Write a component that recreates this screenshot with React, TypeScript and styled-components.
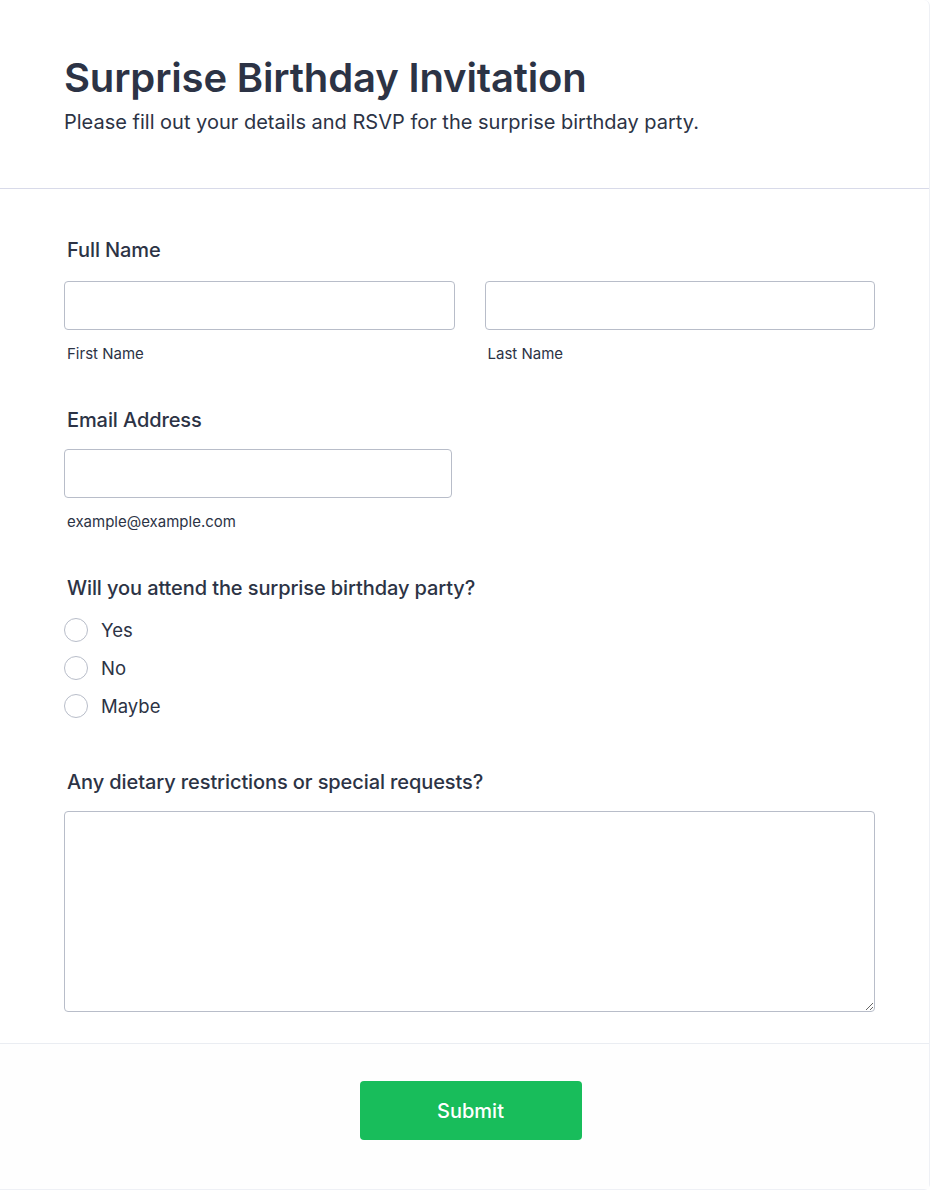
import React from 'react';
import styled, { createGlobalStyle } from 'styled-components';

const GlobalStyle = createGlobalStyle`
  html, body {
    margin: 0;
    padding: 0;
    background: #ffffff;
  }

  body {
    font-family: "Inter", "Noto Sans", sans-serif;
    color: #2c3345;
  }

  * {
    box-sizing: border-box;
  }
`;

const Card = styled.form`
  width: 930px;
  min-height: 1190px;
  background: #ffffff;
  border-right: 1px solid #eef0f5;
  border-bottom: 1px solid #eef0f5;
  border-top-right-radius: 6px;
  border-bottom-right-radius: 6px;
  display: flex;
  flex-direction: column;
`;

const Header = styled.header`
  padding: 56px 64px 52px;
  border-bottom: 1px solid #d8dae9;
`;

const Title = styled.h1`
  margin: 0;
  font-size: 40px;
  line-height: 44px;
  font-weight: 600;
  letter-spacing: -0.15px;
  color: #2c3345;
`;

const Subtitle = styled.p`
  margin: 9px 0 0;
  font-size: 20px;
  line-height: 27px;
  font-weight: 400;
  color: #2c3345;
`;

const Body = styled.div`
  padding: 47px 54px 31px 64px;
  display: flex;
  flex-direction: column;
`;

const Field = styled.div<{ $spacing?: number }>`
  display: flex;
  flex-direction: column;
  margin-bottom: ${(p) => p.$spacing ?? 43}px;

  &:last-child {
    margin-bottom: 0;
  }
`;

// $gap: space under the label, $nudge: extra room above it
const Label = styled.label<{ $gap?: number; $nudge?: number }>`
  display: block;
  padding-left: 3px;
  padding-top: ${(p) => p.$nudge ?? 0}px;
  margin-bottom: ${(p) => p.$gap ?? 16}px;
  font-size: 20px;
  line-height: 27px;
  font-weight: 500;
  letter-spacing: -0.1px;
  color: #2c3345;
`;

const Row = styled.div`
  display: grid;
  grid-template-columns: 1fr 1fr;
  column-gap: 30px;
`;

const Column = styled.div<{ $width?: number }>`
  display: flex;
  flex-direction: column;
  width: ${(p) => (p.$width ? `${p.$width}px` : 'auto')};
`;

const TextInput = styled.input`
  height: 49px;
  width: 100%;
  border: 1px solid #b8bdc9;
  border-radius: 4px;
  background: #ffffff;
  font: inherit;
  font-size: 16px;
  padding: 0 12px;
  outline: none;
`;

const SubLabel = styled.span`
  display: block;
  margin-top: 14px;
  padding-left: 3px;
  font-size: 15px;
  line-height: 20px;
  color: #2c3345;
`;

const RadioList = styled.div`
  display: flex;
  flex-direction: column;
  margin-top: -7px;
`;

const RadioRow = styled.label`
  display: flex;
  align-items: center;
  height: 38px;
  gap: 13px;
  font-size: 18.5px;
  color: #2c3345;
  cursor: pointer;
`;

const RadioCircle = styled.span`
  width: 24px;
  height: 24px;
  border-radius: 50%;
  border: 1px solid #b8bdc9;
  background: #ffffff;
  flex-shrink: 0;
`;

const TextArea = styled.textarea`
  width: 100%;
  height: 201px;
  border: 1px solid #b8bdc9;
  border-radius: 4px;
  background: #ffffff;
  font: inherit;
  font-size: 16px;
  padding: 10px 12px;
  outline: none;
  resize: vertical;
  display: block;
`;

const Footer = styled.div`
  flex: 1;
  border-top: 1px solid #eaedf2;
  background: #fefefe;
  display: flex;
  justify-content: center;
  padding: 37px 0 49px 12px;
`;

const SubmitButton = styled.button`
  width: 222px;
  height: 59px;
  border: none;
  border-radius: 4px;
  background: #18bd5b;
  color: #ffffff;
  font-family: "Inter", "Noto Sans", sans-serif;
  font-size: 20px;
  font-weight: 500;
  cursor: pointer;
`;

const attendance = ['Yes', 'No', 'Maybe'];

export default function App() {
  return (
    <>
      <GlobalStyle />
      <Card onSubmit={(e) => e.preventDefault()}>
        <Header>
          <Title>Surprise Birthday Invitation</Title>
          <Subtitle>Please fill out your details and RSVP for the surprise birthday party.</Subtitle>
        </Header>

        <Body>
          <Field>
            <Label $nudge={1} $gap={17}>Full Name</Label>
            <Row>
              <Column>
                <TextInput type="text" />
                <SubLabel>First Name</SubLabel>
              </Column>
              <Column>
                <TextInput type="text" />
                <SubLabel>Last Name</SubLabel>
              </Column>
            </Row>
          </Field>

          <Field>
            <Label $gap={15}>Email Address</Label>
            <Column $width={388}>
              <TextInput type="email" />
              <SubLabel>example@example.com</SubLabel>
            </Column>
          </Field>

          <Field $spacing={44}>
            <Label>Will you attend the surprise birthday party?</Label>
            <RadioList>
              {attendance.map((option) => (
                <RadioRow key={option}>
                  <RadioCircle />
                  {option}
                </RadioRow>
              ))}
            </RadioList>
          </Field>

          <Field>
            <Label $gap={15}>Any dietary restrictions or special requests?</Label>
            <TextArea />
          </Field>
        </Body>

        <Footer>
          <SubmitButton type="submit">Submit</SubmitButton>
        </Footer>
      </Card>
    </>
  );
}
